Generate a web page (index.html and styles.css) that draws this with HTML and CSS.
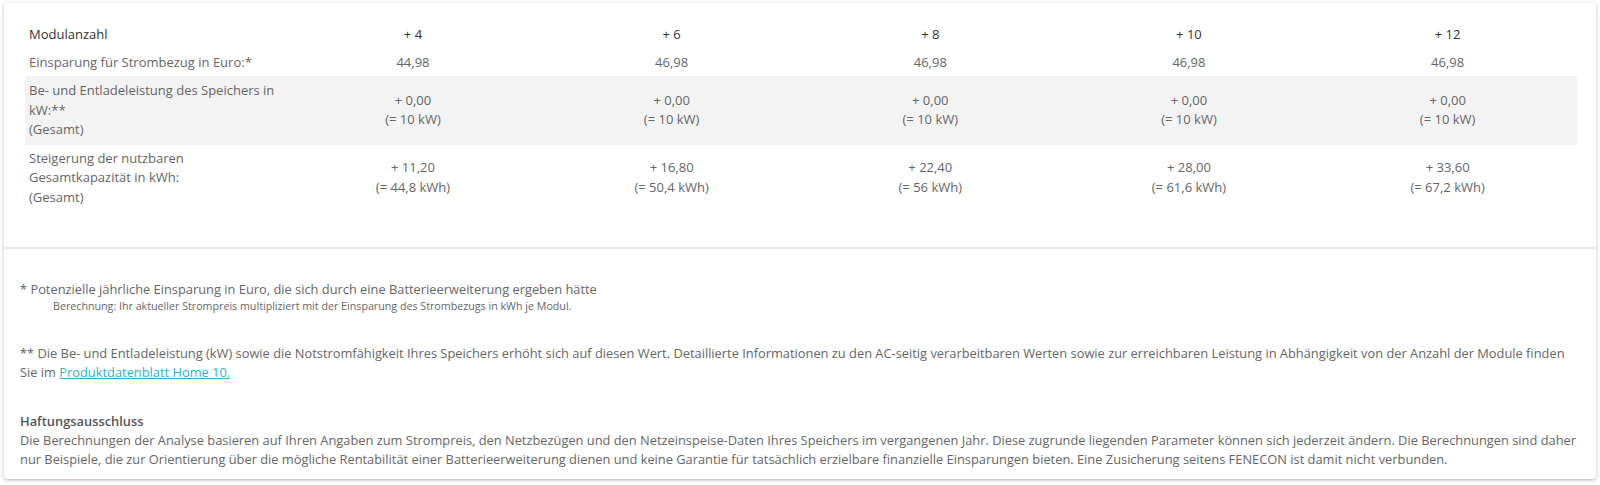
FILE: index.html
```html
<!DOCTYPE html>
<html lang="de">
<head>
<meta charset="utf-8">
<title>Batterieerweiterung</title>
<link rel="stylesheet" href="styles.css">
</head>
<body>
<div class="card">
  <div class="table-section">
    <table class="modules">
      <tr class="head">
        <td>Modulanzahl</td><td>+ 4</td><td>+ 6</td><td>+ 8</td><td>+ 10</td><td>+ 12</td>
      </tr>
      <tr>
        <td>Einsparung für Strombezug in Euro:*</td><td>44,98</td><td>46,98</td><td>46,98</td><td>46,98</td><td>46,98</td>
      </tr>
      <tr class="shaded">
        <td>Be- und Entladeleistung des Speichers in kW:**<br>(Gesamt)</td>
        <td>+ 0,00<br>(= 10 kW)</td><td>+ 0,00<br>(= 10 kW)</td><td>+ 0,00<br>(= 10 kW)</td><td>+ 0,00<br>(= 10 kW)</td><td>+ 0,00<br>(= 10 kW)</td>
      </tr>
      <tr>
        <td>Steigerung der nutzbaren Gesamtkapazität in kWh:<br>(Gesamt)</td>
        <td>+ 11,20<br>(= 44,8 kWh)</td><td>+ 16,80<br>(= 50,4 kWh)</td><td>+ 22,40<br>(= 56 kWh)</td><td>+ 28,00<br>(= 61,6 kWh)</td><td>+ 33,60<br>(= 67,2 kWh)</td>
      </tr>
    </table>
  </div>
  <div class="notes">
    <p class="note">* Potenzielle jährliche Einsparung in Euro, die sich durch eine Batterieerweiterung ergeben hätte</p>
    <p class="sub">Berechnung: Ihr aktueller Strompreis multipliziert mit der Einsparung des Strombezugs in kWh je Modul.</p>
    <p class="note spaced">** Die Be- und Entladeleistung (kW) sowie die Notstromfähigkeit Ihres Speichers erhöht sich auf diesen Wert. Detaillierte Informationen zu den AC-seitig verarbeitbaren Werten sowie zur erreichbaren Leistung in Abhängigkeit von der Anzahl der Module finden Sie im <a class="link" href="#">Produktdatenblatt Home 10.</a></p>
    <p class="title spaced">Haftungsausschluss</p>
    <p class="note">Die Berechnungen der Analyse basieren auf Ihren Angaben zum Strompreis, den Netzbezügen und den Netzeinspeise-Daten Ihres Speichers im vergangenen Jahr. Diese zugrunde liegenden Parameter können sich jederzeit ändern. Die Berechnungen sind daher nur Beispiele, die zur Orientierung über die mögliche Rentabilität einer Batterieerweiterung dienen und keine Garantie für tatsächlich erzielbare finanzielle Einsparungen bieten. Eine Zusicherung seitens FENECON ist damit nicht verbunden.</p>
  </div>
</div>
</body>
</html>
```

FILE: styles.css
```css
html, body {
  margin: 0;
  padding: 0;
  background: #ffffff;
}

body {
  font-family: "Open Sans", "Liberation Sans", sans-serif;
  font-size: 13px;
  color: #666666;
}

.card {
  margin: 3px 4px 5px 4px;
  background: #ffffff;
  border-radius: 3px;
  box-shadow: 0 1px 4px rgba(0, 0, 0, 0.22), 0 2px 2px -1px rgba(0, 0, 0, 0.12);
}

.table-section {
  padding: 18px 19px 36px 21px;
  border-bottom: 2px solid #e8e8e8;
}

.modules {
  width: 100%;
  table-layout: fixed;
  border-collapse: collapse;
}

.modules td {
  padding: 4px;
  line-height: 19.5px;
  text-align: center;
  vertical-align: middle;
}

.modules td:first-child {
  text-align: left;
}

.modules .head td {
  color: #333333;
}

.modules .shaded td {
  background: #f3f3f3;
  padding: 5px 4px;
}

.notes {
  padding: 31px 20px 10px 16px;
}

.notes p {
  margin: 0;
}

.note {
  font-size: 12.85px;
  line-height: 19px;
}

.sub {
  font-size: 10.7px;
  line-height: 15px;
  padding-left: 33px;
}

.spaced {
  margin-top: 30px !important;
}

.title {
  font-size: 12.85px;
  font-weight: 600;
  line-height: 19px;
  color: #555555;
}

.link {
  color: #2bb5c4;
  text-decoration: underline;
}
```
